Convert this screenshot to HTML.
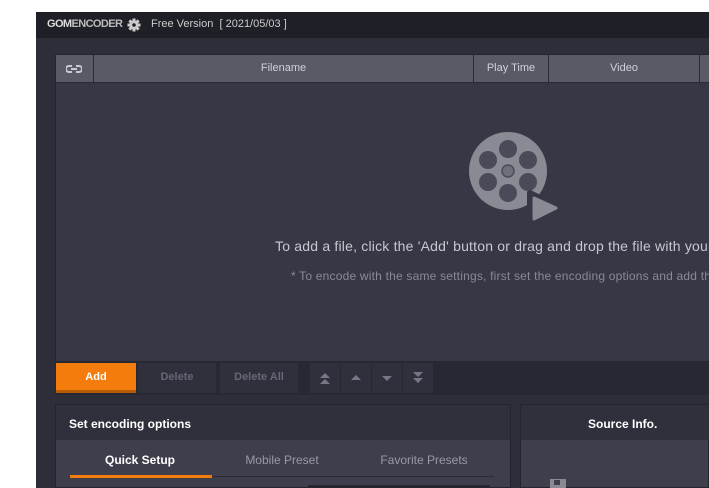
<!DOCTYPE html>
<html><head><style>
body{margin:0;width:709px;height:488px;background:#fff;position:relative;overflow:hidden;font-family:"Liberation Sans",sans-serif;}
div{position:absolute;box-sizing:border-box;}
.t{white-space:nowrap;}
</style></head><body>
<div style="left:36px;top:12px;width:673px;height:476px;background:#2e2e3b;"></div>
<div style="left:36px;top:12px;width:673px;height:26px;background:#1f1f27;"></div>
<div class="t" style="left:47px;top:18px;font-size:11px;color:#ddd;font-weight:bold;letter-spacing:-0.6px">GOM<span style="font-weight:bold;color:#bbb">ENCODER</span></div>
<svg style="position:absolute;left:127px;top:18px" width="14" height="14" viewBox="0 0 14 14"><g fill="#ccc"><rect x="5.5" y="0.5" width="3" height="13"/><rect x="0.5" y="5.5" width="13" height="3"/><rect x="5.5" y="0.5" width="3" height="13" transform="rotate(45 7 7)"/><rect x="5.5" y="0.5" width="3" height="13" transform="rotate(-45 7 7)"/><circle cx="7" cy="7" r="4.6"/></g><circle cx="7" cy="7" r="1.8" fill="#1f1f27"/></svg>
<div class="t" style="left:151px;top:18px;font-size:11px;color:#ccc">Free Version &nbsp;[ 2021/05/03 ]</div>
<div style="left:55px;top:54px;width:654px;height:307px;background:#373746;border-left:1px solid #25252f;border-top:1px solid #25252f"></div>
<div style="left:56px;top:55px;width:653px;height:28px;background:#5a5a66;border-bottom:1px solid #2a2a34"></div>
<div style="left:93px;top:55px;width:1px;height:28px;background:#2a2a34"></div>
<div style="left:473px;top:55px;width:1px;height:28px;background:#2a2a34"></div>
<div style="left:548px;top:55px;width:1px;height:28px;background:#2a2a34"></div>
<div style="left:699px;top:55px;width:1px;height:28px;background:#2a2a34"></div>
<svg style="position:absolute;left:66px;top:64px" width="16" height="10" viewBox="0 0 16 10"><path d="M6 2H3a2 2 0 0 0 0 6h3M10 2h3a2 2 0 0 1 0 6h-3M5 5h6" fill="none" stroke="#c8c8d0" stroke-width="2"/></svg>
<div class="t" style="left:94px;top:62px;width:379px;text-align:center;font-size:11px;color:#d0d0d8">Filename</div>
<div class="t" style="left:474px;top:62px;width:74px;text-align:center;font-size:11px;color:#d0d0d8">Play Time</div>
<div class="t" style="left:549px;top:62px;width:150px;text-align:center;font-size:11px;color:#d0d0d8">Video</div>
<svg style="position:absolute;left:468px;top:131px" width="96" height="96" viewBox="0 0 96 96"><circle cx="40" cy="40" r="39" fill="#8a8a94"/><g fill="#4a4a58"><circle cx="40" cy="18" r="9"/><circle cx="40" cy="62" r="9"/><circle cx="20" cy="29" r="9"/><circle cx="60" cy="29" r="9"/><circle cx="20" cy="51" r="9"/><circle cx="60" cy="51" r="9"/></g><circle cx="40" cy="40" r="6" fill="#6f6f7a" stroke="#4a4a58" stroke-width="1.5"/><path d="M62 62 L62 92 L92 77 Z" fill="#373746" stroke="#373746" stroke-width="6" stroke-linejoin="round"/><path d="M66 67 L66 88 L88 77 Z" fill="#8a8a94" stroke="#8a8a94" stroke-width="3" stroke-linejoin="round"/></svg>
<div class="t" style="left:275px;top:238px;font-size:14px;letter-spacing:0.2px;color:#c8c8d0">To add a file, click the 'Add' button or drag and drop the file with your</div>
<div class="t" style="left:291px;top:269px;font-size:12px;letter-spacing:0.2px;color:#8a8a96">* To encode with the same settings, first set the encoding options and add th</div>
<div style="left:55px;top:361px;width:654px;height:34px;background:#282833"></div>
<div style="left:56px;top:363px;width:80px;height:30px;background:#f47c0c;border-bottom:3px solid #b85c08"></div>
<div class="t" style="left:56px;top:371px;width:80px;text-align:center;font-size:11px;font-weight:bold;color:#fff">Add</div>
<div style="left:138px;top:363px;width:78px;height:30px;background:#30303d"></div>
<div class="t" style="left:138px;top:371px;width:78px;text-align:center;font-size:11px;font-weight:bold;color:#666674">Delete</div>
<div style="left:220px;top:363px;width:78px;height:30px;background:#30303d"></div>
<div class="t" style="left:220px;top:371px;width:78px;text-align:center;font-size:11px;font-weight:bold;color:#666674">Delete All</div>
<div style="left:310px;top:363px;width:30px;height:30px;background:#30303d"></div>
<div style="left:341px;top:363px;width:30px;height:30px;background:#30303d"></div>
<div style="left:372px;top:363px;width:30px;height:30px;background:#30303d"></div>
<div style="left:403px;top:363px;width:30px;height:30px;background:#30303d"></div>
<svg style="position:absolute;left:310px;top:363px" width="124" height="30" viewBox="0 0 124 30"><g fill="#77778a"><path d="M10 15l5-5 5 5zM10 21l5-5 5 5z"/><path d="M41 17l5-5 5 5z"/><path d="M72 13l5 5 5-5z"/><path d="M103 9l5 5 5-5zM103 15l5 5 5-5z"/></g></svg>
<div style="left:55px;top:404px;width:456px;height:84px;background:#3e3e4c;border:1px solid #25252f"></div>
<div style="left:56px;top:405px;width:454px;height:35px;background:#30303d"></div>
<div class="t" style="left:69px;top:417px;font-size:12px;font-weight:bold;color:#fff">Set encoding options</div>
<div class="t" style="left:70px;top:453px;width:140px;text-align:center;font-size:12px;font-weight:bold;color:#fff">Quick Setup</div>
<div class="t" style="left:212px;top:453px;width:140px;text-align:center;font-size:12px;color:#9a9aa6">Mobile Preset</div>
<div class="t" style="left:354px;top:453px;width:140px;text-align:center;font-size:12px;color:#9a9aa6">Favorite Presets</div>
<div style="left:70px;top:476px;width:424px;height:1px;background:#2a2a34"></div>
<div style="left:70px;top:475px;width:142px;height:3px;background:#f47c0c"></div>
<div style="left:308px;top:485px;width:182px;height:3px;background:#25252f"></div>
<div style="left:520px;top:404px;width:189px;height:84px;background:#3e3e4c;border:1px solid #25252f"></div>
<div style="left:521px;top:405px;width:188px;height:35px;background:#30303d"></div>
<div class="t" style="left:588px;top:417px;font-size:12px;font-weight:bold;color:#fff">Source Info.</div>
<div style="left:550px;top:479px;width:16px;height:9px;background:#8a8a94"></div>
<div style="left:554px;top:480px;width:6px;height:5px;background:#3e3e4c"></div>
</body></html>
